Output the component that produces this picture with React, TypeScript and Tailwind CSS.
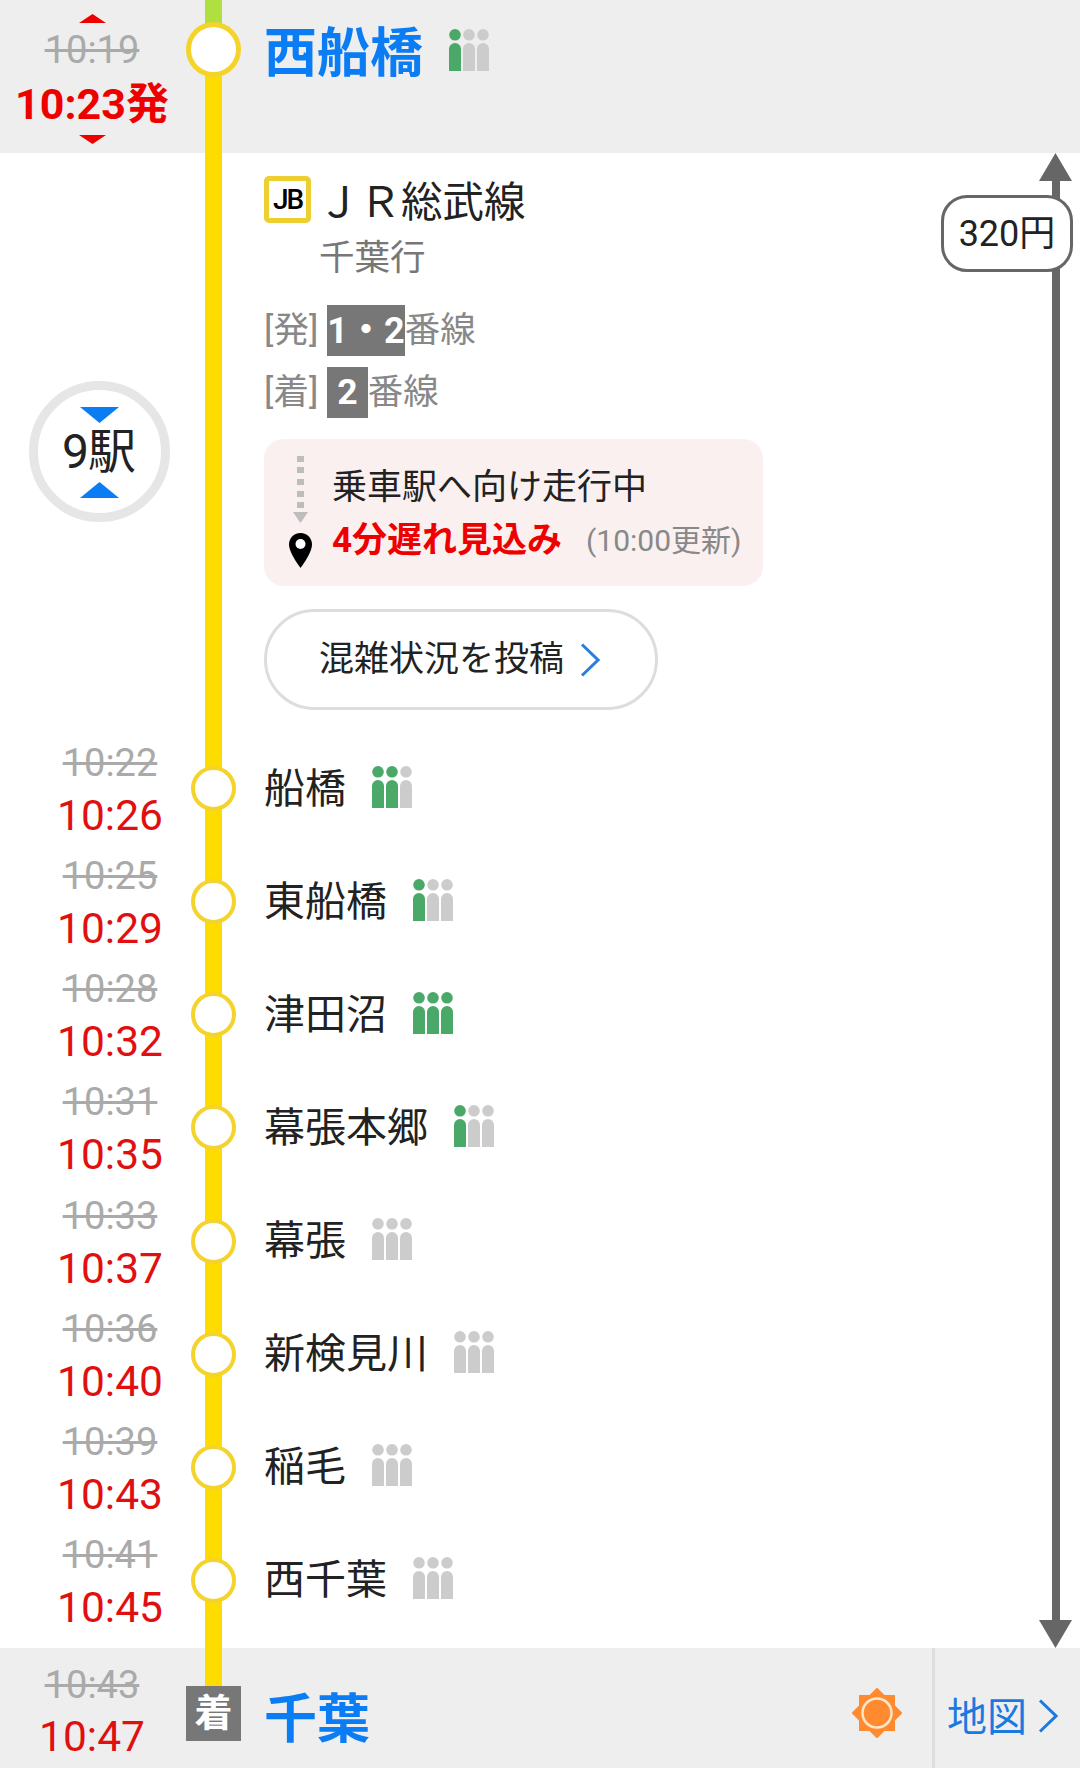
const stops = [
  { planned: "10:22", actual: "10:26", name: "船橋", level: 2 },
  { planned: "10:25", actual: "10:29", name: "東船橋", level: 1 },
  { planned: "10:28", actual: "10:32", name: "津田沼", level: 3 },
  { planned: "10:31", actual: "10:35", name: "幕張本郷", level: 1 },
  { planned: "10:33", actual: "10:37", name: "幕張", level: 0 },
  { planned: "10:36", actual: "10:40", name: "新検見川", level: 0 },
  { planned: "10:39", actual: "10:43", name: "稲毛", level: 0 },
  { planned: "10:41", actual: "10:45", name: "西千葉", level: 0 },
];

const Crowd = ({ level }: { level: number }) => (
  <svg width="40" height="42" viewBox="0 0 40 42" className="shrink-0">
    {[0, 1, 2].map((i) => {
      const x = i * 14;
      const fill = i < level ? "#4aa868" : "#cccccc";
      return (
        <g key={i} fill={fill}>
          <circle cx={x + 6} cy="5.8" r="5.8" />
          <path d={`M${x} 42V20a6 6 0 0 1 12 0V42Z`} />
        </g>
      );
    })}
  </svg>
);

const Triangle = ({ up, className }: { up: boolean; className: string }) => (
  <svg viewBox="0 0 10 10" preserveAspectRatio="none" className={className}>
    <path d={up ? "M5 0L10 10H0Z" : "M0 0H10L5 10Z"} fill="currentColor" />
  </svg>
);

const Chevron = ({ className }: { className: string }) => (
  <svg viewBox="0 0 20 34" fill="none" className={className}>
    <path d="M2 1.5L18 17L2 32.5" stroke="currentColor" strokeWidth="3" />
  </svg>
);

const Sun = () => (
  <svg width="50" height="50" viewBox="0 0 50 50">
    <g fill="#ff8a30">
      <rect x="7" y="7" width="36" height="36" />
      <rect x="7" y="7" width="36" height="36" transform="rotate(45 25 25)" />
    </g>
    <circle cx="25" cy="25" r="14.5" fill="#ff8a30" stroke="#ffe6c8" strokeWidth="2.5" />
  </svg>
);

const TrackIcon = () => (
  <svg width="26" height="113" viewBox="0 0 26 113" className="shrink-0">
    <g fill="#bdbdbd">
      <rect x="9" y="0" width="7" height="6" />
      <rect x="9" y="11" width="7" height="6" />
      <rect x="9" y="23" width="7" height="6" />
      <rect x="9" y="35" width="7" height="6" />
      <rect x="9" y="46" width="7" height="6" />
      <path d="M5 56H20L12.500 67Z" />
    </g>
    <path
      d="M12.500 77C5.500 77 1 82.500 1 88.500C1 97 12.500 112 12.500 112C12.500 112 24 97 24 88.500C24 82.500 19.500 77 12.500 77Z"
      fill="#000000"
    />
    <circle cx="12.500" cy="88" r="5" fill="#ffffff" />
  </svg>
);

export default function App() {
  return (
    <div className="flex h-[1768px] w-[1080px] flex-col overflow-hidden bg-white font-['Roboto','Noto_Sans_CJK_JP',sans-serif] text-[#222]">
      {/* Departure */}
      <div className="flex h-[153px] shrink-0 bg-[#eeeeee]">
        <div className="flex w-[205px] shrink-0 flex-col items-center pr-[21px] pt-[14px]">
          <Triangle up className="h-[9px] w-[27px] text-[#ee0000]" />
          <div className="mt-[5px] text-[38px] leading-[44px] text-[#aaaaaa] line-through">10:19</div>
          <div className="mt-[7px] text-[43px] font-bold leading-[50px] text-[#ee0000]">10:23発</div>
          <Triangle up={false} className="mt-[6px] h-[9px] w-[27px] text-[#ee0000]" />
        </div>
        <div className="relative flex w-[17px] shrink-0 flex-col">
          <div className="h-[25px] bg-[#b0e040]" />
          <div className="flex-1 bg-[#ffdc00]" />
          <div className="absolute left-[-19px] top-[22px] h-[55px] w-[55px] rounded-full border-[5px] border-[#f3d32c] bg-white" />
        </div>
        <div className="flex items-start pl-[42px] pt-[24px]">
          <span className="text-[53px] font-bold leading-[60px] text-[#0a7df5]">西船橋</span>
          <div className="ml-[26px] mt-[5px]">
            <Crowd level={1} />
          </div>
        </div>
      </div>

      {/* Ride */}
      <div className="flex h-[1495px] shrink-0">
        <div className="flex min-w-0 flex-1 flex-col">
          <div className="flex h-[578px] shrink-0">
            <div className="w-[205px] shrink-0 pl-[29px] pt-[228px]">
              <div className="flex h-[141px] w-[141px] flex-col items-center rounded-full border-[9px] border-[#e6e6e6] pr-[2px] pt-[17px]">
                <Triangle up={false} className="ml-[2px] h-[16px] w-[39px] text-[#0a7df5]" />
                <div className="mt-[1px] h-[56px] text-[48px] leading-[56px] tracking-[-1px] text-[#222]">9駅</div>
                <Triangle up className="ml-[2px] mt-[2px] h-[16px] w-[39px] text-[#0a7df5]" />
              </div>
            </div>
            <div className="w-[17px] shrink-0 bg-[#ffdc00]" />
            <div className="flex flex-col pl-[42px] pt-[23px]">
              <div className="flex h-[47px] items-center">
                <div className="flex h-[47px] w-[47px] items-center justify-center rounded-[5px] border-[5px] border-[#edcf30] bg-white text-[28px] font-medium tracking-[-2px] text-black">
                  JB
                </div>
                <span className="ml-[7px] mt-[6px] text-[41.500px] leading-[47px]">ＪＲ総武線</span>
              </div>
              <div className="mt-[13px] pl-[55px] text-[35.500px] leading-[44px] text-[#777777]">千葉行</div>
              <div className="mt-[25px] flex h-[51px] items-center text-[35.500px] text-[#888888]">
                <span>[発]</span>
                <span className="ml-[9px] flex h-[51px] items-center bg-[#777777] text-[36px] font-bold text-white">1・2</span>
                <span>番線</span>
              </div>
              <div className="mt-[11px] flex h-[51px] items-center text-[35.500px] text-[#888888]">
                <span>[着]</span>
                <span className="ml-[9px] flex h-[51px] items-center bg-[#777777] px-[10px] font-bold text-white">2</span>
                <span>番線</span>
              </div>
              <div className="mt-[21px] flex h-[147px] w-[499px] rounded-[20px] bg-[#faf0f0] pl-[24px] pt-[17px]">
                <TrackIcon />
                <div className="ml-[18px] flex flex-col">
                  <div className="mt-[10px] text-[35px] leading-[44px]">乗車駅へ向け走行中</div>
                  <div className="mt-[9px] flex items-center leading-[44px]">
                    <span className="text-[35px] font-bold text-[#ee0000]">4分遅れ見込み</span>
                    <span className="ml-[24px] text-[30px] text-[#888888]">(10:00更新)</span>
                  </div>
                </div>
              </div>
              <div className="mt-[23px] flex h-[101px] w-[394px] items-center rounded-full border-[3px] border-[#dddddd] pl-[52px]">
                <span className="mt-[2px] text-[35px]">混雑状況を投稿</span>
                <Chevron className="ml-[16px] h-[34px] w-[20px] text-[#2b7de0]" />
              </div>
            </div>
          </div>

          <div className="grid h-[905px] shrink-0 grid-rows-8">
            {stops.map((stop) => (
              <div key={stop.name} className="flex">
                <div className="flex w-[205px] shrink-0 flex-col items-center pl-[15px] pt-[10px]">
                  <div className="text-[38px] leading-[44px] text-[#aaaaaa] line-through">{stop.planned}</div>
                  <div className="mt-[6px] text-[42.500px] leading-[50px] text-[#e01010]">{stop.actual}</div>
                </div>
                <div className="relative w-[17px] shrink-0 bg-[#ffdc00]">
                  <div className="absolute left-[-14px] top-[35px] h-[45px] w-[45px] rounded-full border-[4px] border-[#f3d32c] bg-white" />
                </div>
                <div className="flex items-center pl-[42px] pt-[2px]">
                  <span className="text-[41px] leading-[50px]">{stop.name}</span>
                  <div className="ml-[26px] mb-[4px]">
                    <Crowd level={stop.level} />
                  </div>
                </div>
              </div>
            ))}
          </div>
          <div className="flex-1">
            <div className="ml-[205px] h-full w-[17px] bg-[#ffdc00]" />
          </div>
        </div>

        {/* Fare */}
        <div className="relative mr-[8px] flex w-[33px] shrink-0 flex-col items-center">
          <Triangle up className="h-[28px] w-[33px] shrink-0 text-[#666666]" />
          <div className="w-[8px] flex-1 bg-[#666666]" />
          <Triangle up={false} className="h-[28px] w-[33px] shrink-0 text-[#666666]" />
          <div className="absolute left-[-98px] top-[42px] flex h-[77px] w-[132px] items-center justify-center rounded-[26px] border-[3px] border-[#666666] bg-white text-[36px]">
            320円
          </div>
        </div>
      </div>

      {/* Arrival */}
      <div className="flex flex-1 bg-[#eeeeee]">
        <div className="flex w-[205px] shrink-0 flex-col items-center pr-[21px] pt-[15px]">
          <div className="text-[38px] leading-[44px] text-[#aaaaaa] line-through">10:43</div>
          <div className="mt-[5px] text-[42.500px] leading-[50px] text-[#e01010]">10:47</div>
        </div>
        <div className="relative w-[17px] shrink-0">
          <div className="h-[38px] bg-[#ffdc00]" />
          <div className="absolute left-[-19px] top-[38px] flex h-[55px] w-[55px] items-center justify-center bg-[#777777] text-[38px] font-bold text-white">
            着
          </div>
        </div>
        <div className="pl-[42px] pt-[42px]">
          <span className="text-[53px] font-bold leading-[60px] text-[#0a7df5]">千葉</span>
        </div>
        <div className="ml-auto flex h-full">
          <div className="mr-[30px] mt-[40px]">
            <Sun />
          </div>
          <div className="w-[3px] bg-[#dddddd]" />
          <div className="flex w-[145px] items-start pl-[12px] pt-[46px] text-[#1a7ae0]">
            <span className="text-[40px] leading-[48px]">地図</span>
            <Chevron className="ml-[11px] mt-[5px] h-[34px] w-[20px]" />
          </div>
        </div>
      </div>
    </div>
  );
}
